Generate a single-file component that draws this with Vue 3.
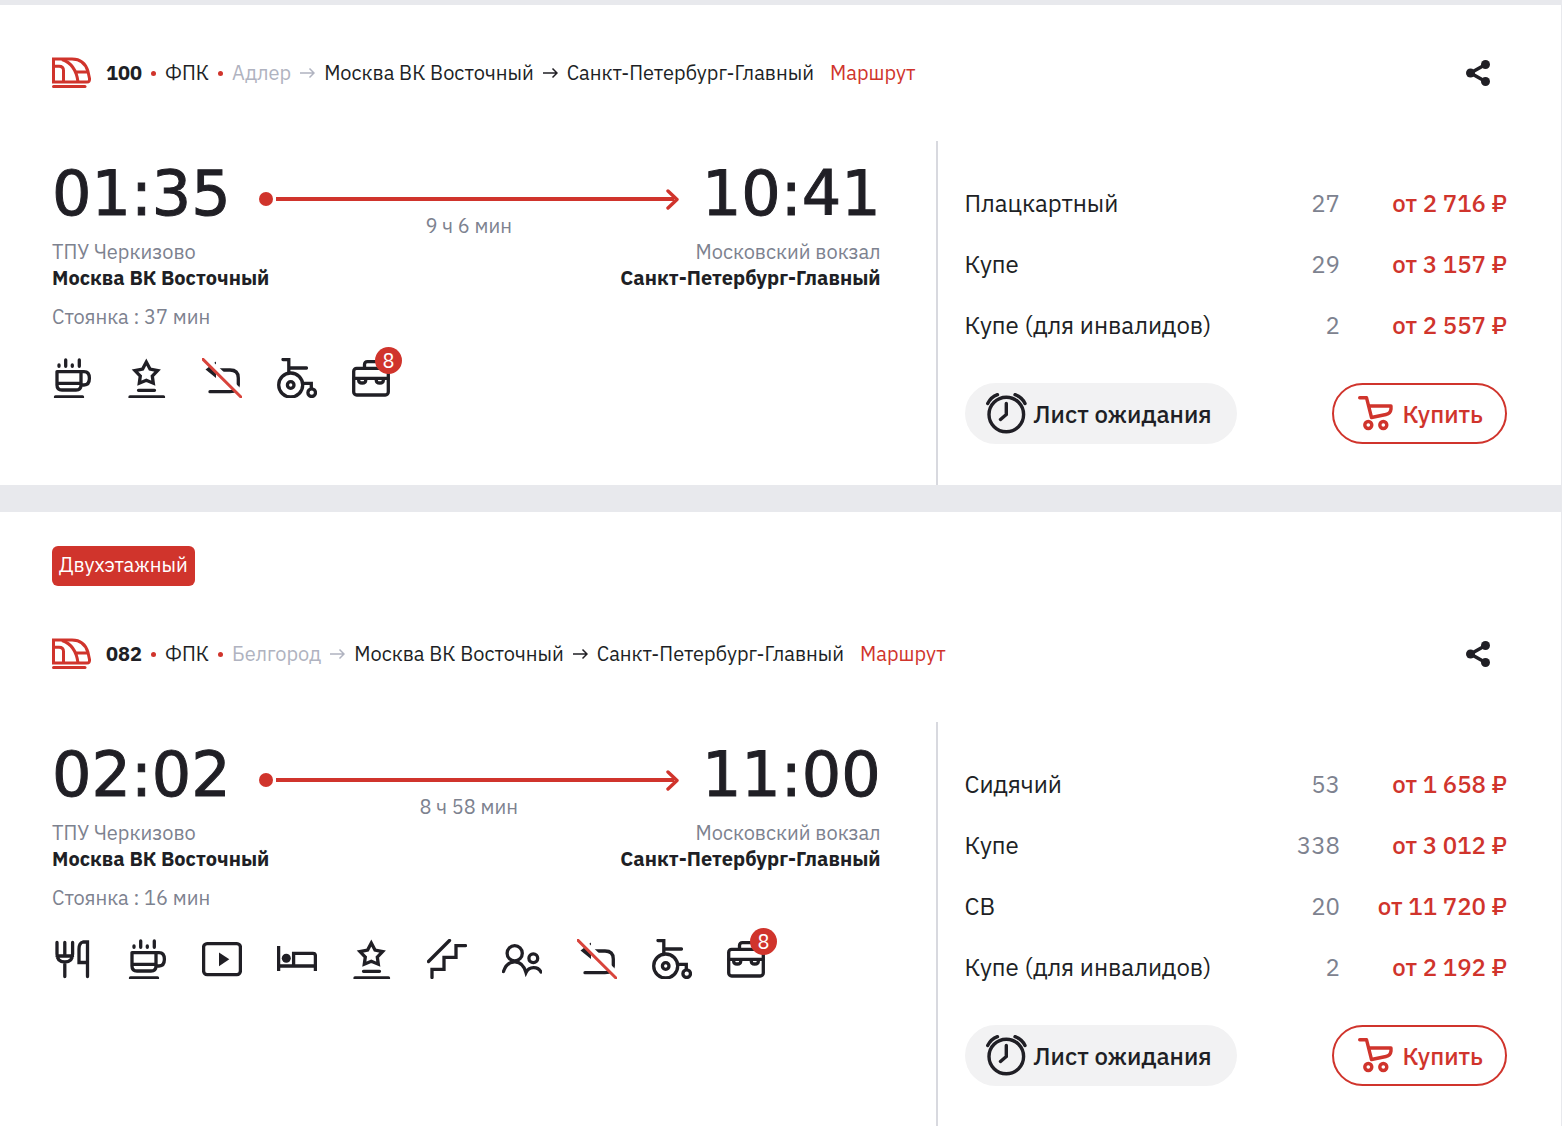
<script setup>
const trains = [
  {
    number: '100', origin: 'Адлер', tag: '', depart: '01:35', arrive: '10:41', duration: '9 ч 6 мин', stop: '37 мин',
    services: ['cup', 'star', 'noreturn', 'wheelchair', 'luggage'],
    seats: [['Плацкартный', 27, '2 716'], ['Купе', 29, '3 157'], ['Купе (для инвалидов)', 2, '2 557']],
  },
  {
    number: '082', origin: 'Белгород', tag: 'Двухэтажный', depart: '02:02', arrive: '11:00', duration: '8 ч 58 мин', stop: '16 мин',
    services: ['food', 'cup', 'video', 'bed', 'star', 'stairs', 'people', 'noreturn', 'wheelchair', 'luggage'],
    seats: [['Сидячий', 53, '1 658'], ['Купе', 338, '3 012'], ['СВ', 20, '11 720'], ['Купе (для инвалидов)', 2, '2 192']],
  },
]
</script>

<template>
  <main class="page">
    <article v-for="t in trains" :key="t.number" class="card">
      <div v-if="t.tag" class="tag-row"><span class="tag">{{ t.tag }}</span></div>
      <header class="head">
        <svg class="train" viewBox="0 0 40 31" fill="none" stroke="currentColor" stroke-width="3">
          <path d="M1.5 1.5H20C30 1.5 34 7 36 14L37.5 21Q38 24.500 35 24.500H1.500Z" />
          <path d="M1.500 8.700H7Q11.500 8.700 11.500 13V24.500M10 2C19 5 24.500 12 26 24.500M24.500 14.500H36.500" />
          <path d="M1.500 29H33" stroke-linecap="round" />
        </svg>
        <b class="number">{{ t.number }}</b>
        <i class="bullet"></i>
        <span>ФПК</span>
        <i class="bullet"></i>
        <span class="faded">{{ t.origin }}</span>
        <svg class="arrow faded" viewBox="0 0 15 12" fill="none" stroke="currentColor" stroke-width="1.500"><path d="M0 6H14M9.500 1.500L14 6L9.500 10.500" /></svg>
        <span>Москва ВК Восточный</span>
        <svg class="arrow" viewBox="0 0 15 12" fill="none" stroke="currentColor" stroke-width="1.500"><path d="M0 6H14M9.500 1.500L14 6L9.500 10.500" /></svg>
        <span>Санкт-Петербург-Главный</span>
        <a class="route" href="#">Маршрут</a>
        <button class="share" type="button" aria-label="Поделиться">
          <svg viewBox="0 0 24 26" fill="currentColor"><path d="M19.500 4.500L4.500 13L19.500 21.500" fill="none" stroke="currentColor" stroke-width="3.500" /><circle cx="19.500" cy="4.500" r="4.500" /><circle cx="4.500" cy="13" r="4.500" /><circle cx="19.500" cy="21.500" r="4.500" /></svg>
        </button>
      </header>

      <div class="body">
        <section class="trip">
          <div class="times">
            <time class="time">{{ t.depart }}</time>
            <div class="track">
              <div class="line">
                <i class="dot"></i><i class="bar"></i>
                <svg class="tip" viewBox="0 0 13 21" fill="none" stroke="currentColor" stroke-width="3.400" stroke-linecap="round" stroke-linejoin="round"><path d="M2 2L11 10.500L2 19" /></svg>
              </div>
              <span class="muted">{{ t.duration }}</span>
            </div>
            <time class="time">{{ t.arrive }}</time>
          </div>
          <div class="stations">
            <div><span class="muted">ТПУ Черкизово</span><b>Москва ВК Восточный</b></div>
            <div class="end"><span class="muted">Московский вокзал</span><b>Санкт-Петербург-Главный</b></div>
          </div>
          <p class="stop muted">Стоянка : {{ t.stop }}</p>
          <ul class="services">
            <li v-for="s in t.services" :key="s">
              <svg viewBox="0 0 40 40" fill="none" stroke="currentColor" stroke-width="3.300" stroke-linecap="round">
                <template v-if="s === 'cup'">
                  <path d="M5 13.600H32Q37.400 13.600 37.400 20.300T32 27H29M5 13.600V27Q5 32 10 32H24Q29 32 29 27V13.600M5 25.300H29M3.500 39H30.500" />
                  <path d="M7 7V8.300M13.700 2V8.300M20.300 7V8.300M27.300 2V8.300" />
                </template>
                <template v-else-if="s === 'star'">
                  <path stroke-linecap="butt" d="M19.300 4L23 11L30.600 12.600L25.300 18L26.300 25.200L19.300 22.200L12.300 25.200L13.300 18L8 12.600L15.600 11Z" />
                  <path d="M11.500 32.300H27.500M3 39H36.500" />
                </template>
                <template v-else-if="s === 'noreturn'">
                  <path d="M18 12H28Q36.300 12 36.300 20V27Q36 33.700 28 33.700H8" />
                  <path d="M3.500 11.500L14 3.500V20Z" fill="currentColor" stroke="none" />
                  <path d="M2 -1L42 38" stroke="#fff" stroke-width="6" />
                  <path d="M1 1.300L39 39" stroke="#d8443c" stroke-width="3" />
                </template>
                <template v-else-if="s === 'wheelchair'">
                  <circle cx="13.700" cy="27" r="12" /><circle cx="13.700" cy="27" r="3.300" /><circle cx="34.700" cy="34.700" r="3.800" />
                  <path d="M6 1.500H11.800V14M11.800 10H29.500M26.700 25.300H34.300V30" />
                </template>
                <template v-else-if="s === 'luggage'">
                  <rect x="1.700" y="10.300" width="34.600" height="26.700" rx="3" />
                  <path d="M2 20.300H36M12.500 10V6.500Q12.500 3.600 15.500 3.600H24Q27 3.600 27 6.500V10M6.700 21V22.500Q6.700 25 10.200 25T13.700 22.500V21M24.300 21V22.500Q24.300 25 27.800 25T31.300 22.500V21" />
                </template>
                <template v-else-if="s === 'food'">
                  <path d="M5 3.500V15Q5 23 12.800 23T20.600 15V3.500M12.800 3.500V17M5 17H20.600M12.800 23V37.500M35.500 37.500V3H31Q27 4 27 10V23.500H35" />
                </template>
                <template v-else-if="s === 'video'">
                  <rect x="1.600" y="4.600" width="36.800" height="31" rx="3.500" />
                  <path d="M17 13.500L27.300 20.300L17 27.300Z" fill="currentColor" stroke="none" />
                </template>
                <template v-else-if="s === 'bed'">
                  <path stroke-linecap="butt" d="M1.600 7V32M1.600 27H38.400M16.600 27V14.300H36Q38.400 14.300 38.400 17V32" />
                  <circle cx="9.300" cy="19.300" r="4.500" fill="currentColor" stroke="none" />
                </template>
                <template v-else-if="s === 'stairs'">
                  <path d="M1.500 22.500L22.500 1.500M5 38.500V30.300H17V18.300H29V6.600H38.500" />
                </template>
                <template v-else>
                  <circle cx="12.700" cy="14.300" r="7.600" /><circle cx="31.300" cy="19.300" r="4.400" />
                  <path d="M1.500 32.500C6 19.500 20 19.500 24 33.500C27 27 36 27 39 33" />
                </template>
              </svg>
              <span v-if="s === 'luggage'" class="badge">8</span>
            </li>
          </ul>
        </section>

        <section class="offers">
          <table>
            <tbody>
              <tr v-for="r in t.seats" :key="r[0]"><td>{{ r[0] }}</td><td class="count">{{ r[1] }}</td><td class="price">от {{ r[2] }} ₽</td></tr>
            </tbody>
          </table>
          <div class="actions">
            <button class="wait" type="button">
              <svg viewBox="0 0 41 41" fill="none" stroke="currentColor" stroke-width="3.400" stroke-linecap="round"><circle cx="20.300" cy="21.500" r="17.300" /><path d="M20.300 10.500V21.500L14.500 26.500M1.700 10.500Q5 4 11.500 1.700M29 1.700Q36 4 39 10.500" /></svg>
              Лист ожидания
            </button>
            <button class="buy" type="button">
              <svg viewBox="0 0 35 35" fill="none" stroke="currentColor" stroke-width="3.400" stroke-linecap="round" stroke-linejoin="round"><path d="M1.700 1.700H8.500L13.500 21.500L28 18.500Q32.500 17.500 33 13V10H11" /><circle cx="10.300" cy="29" r="3.500" /><circle cx="25.300" cy="29" r="3.500" /></svg>
              Купить
            </button>
          </div>
        </section>
      </div>
    </article>
  </main>
</template>

<style>
body { margin: 0; background: #e8e9ed; }
</style>

<style scoped>
.page { padding: 5px 1px 0 0; color: #201f25; font: 20px/26px "IBM Plex Sans", Inter, sans-serif; }
.card { background: #fff; overflow: hidden; }
.card + .card { margin-top: 27px; }
.tag-row { display: flex; padding: 34px 52px 0; }
.tag { padding: 0 7px 2px; border-radius: 6px; background: #d0342c; color: #fff; line-height: 38px; }
.head { display: flex; align-items: center; gap: 9px; padding: 52px 70px 52px 52px; white-space: nowrap; }
.train { width: 40px; height: 32px; margin-right: 5px; color: #d0342c; }
.bullet { width: 5px; height: 5px; border-radius: 50%; background: #d0342c; }
.arrow { width: 15px; height: 12px; }
.faded { color: #b0b3c0; }
.muted { color: #7d828f; }
.route { margin-left: 7px; color: #d0342c; text-decoration: none; }
button { font: inherit; color: inherit; border: 0; background: none; padding: 0; }
.share { display: flex; margin-left: auto; }
.share svg { width: 26px; height: 26px; }
.body { display: grid; grid-template-columns: calc(60% - 1px) 1fr; }
.trip { padding: 22px 55px 0 52px; }
.times { display: flex; justify-content: space-between; }
.time { font: 62px/62px "DejaVu Sans", sans-serif; -webkit-text-stroke: 1px currentColor; }
.track { flex: 1; display: flex; flex-direction: column; align-items: center; margin: 25px 23px 0 28px; }
.line { display: flex; align-items: center; align-self: stretch; height: 22px; margin-bottom: 3px; color: #d0342c; }
.dot { width: 14px; height: 14px; margin-right: 3px; border-radius: 50%; background: #d0342c; }
.bar { flex: 1; height: 4px; margin-right: -8px; background: #d0342c; }
.tip { width: 13px; height: 21px; }
.stations { display: flex; justify-content: space-between; }
.stations > div { display: flex; flex-direction: column; }
.end { text-align: right; }
.stop { margin: 13px 0 28px; }
.services { display: flex; gap: 35px; margin: 0; padding: 0; list-style: none; }
.services li { position: relative; height: 40px; }
.services svg { display: block; width: 40px; height: 40px; }
.badge { position: absolute; top: -11px; left: 23px; width: 27px; height: 27px; border-radius: 50%; background: #d0342c; color: #fff; line-height: 27px; text-align: center; }
.offers { padding: 31px 54px 41px 27px; border-left: 2px solid #d8d9df; font-size: 24px; }
.card:last-child .offers { padding-bottom: 40px; }
table { width: 100%; border-collapse: collapse; }
td { height: 61px; padding: 0; white-space: nowrap; }
.count { text-align: right; color: #7d828f; }
.price { width: 167px; text-align: right; color: #d0342c; font-weight: 500; }
.actions { display: flex; justify-content: space-between; margin-top: 28px; }
.actions button { display: flex; align-items: center; box-sizing: border-box; height: 61px; border-radius: 31px; font-weight: 500; white-space: nowrap; }
.wait { gap: 7px; padding: 0 25px 0 21px; background: #f2f2f3; }
.wait svg { width: 41px; height: 41px; }
.actions .buy { gap: 9px; padding: 0 22px 0 24px; border: 2px solid #d0342c; color: #d0342c; }
.buy svg { width: 35px; height: 35px; }
</style>
